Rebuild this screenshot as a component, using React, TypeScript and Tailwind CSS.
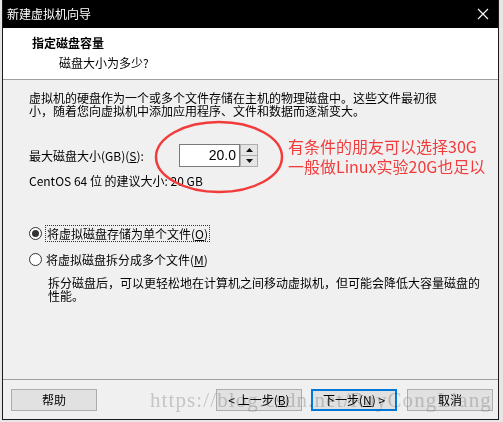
import React from 'react';

const cjk = "font-['Microsoft_YaHei','Noto_Sans_CJK_SC',sans-serif]";

const Radio = ({ checked }: { checked?: boolean }) => (
  <span className="flex h-[13px] w-[13px] shrink-0 items-center justify-center rounded-full border border-[#333] bg-white">
    {checked && <span className="h-[7px] w-[7px] rounded-full bg-[#333]" />}
  </span>
);

const Btn = ({ children, primary, className = '' }: { children: React.ReactNode; primary?: boolean; className?: string }) => (
  <button
    className={`flex h-[22px] w-[86px] items-center justify-center bg-[#e1e1e1] text-[12px] text-black ${
      primary ? 'border-2 border-[#0078d7]' : 'border border-[#adadad]'
    } ${className}`}
  >
    {children}
  </button>
);

export default function App() {
  return (
    <div className={`relative h-[422px] w-[503px] overflow-hidden bg-[#e6e6e6] ${cjk}`}>
      <div className="ml-[2px] flex h-[420px] w-[497px] flex-col border-b border-r border-l border-[#1a1a1a] bg-[#f0f0f0]">
        {/* title bar */}
        <div className="flex h-[28px] shrink-0 items-center justify-between bg-black pl-[4px] pr-[9px] text-white">
          <span className="text-[12px] leading-none">新建虚拟机向导</span>
          <svg width="12" height="12" viewBox="0 0 12 12" stroke="white" strokeWidth="1.1">
            <path d="M1 1 L11 11 M11 1 L1 11" />
          </svg>
        </div>

        {/* header */}
        <div className="h-[52px] shrink-0 border-b border-[#a0a0a0] bg-white pt-[6px]">
          <div className="pl-[29px] text-[12px] font-bold leading-[18px]">指定磁盘容量</div>
          <div className="pl-[56px] pt-[2px] text-[12px] leading-[18px]">磁盘大小为多少?</div>
        </div>

        {/* body */}
        <div className="flex flex-1 flex-col pl-[26px] pt-[11px] text-[12px] text-black">
          <p className="leading-[13px]">
            虚拟机的硬盘作为一个或多个文件存储在主机的物理磁盘中。这些文件最初很
            <br />
            小，随着您向虚拟机中添加应用程序、文件和数据而逐渐变大。
          </p>

          <div className="mt-[27px] flex items-center">
            <span className="w-[150px]">
              最大磁盘大小(GB)(<span className="underline">S</span>):
            </span>
            <div className="flex h-[23px] w-[61px] items-center justify-end border border-[#7a7a7a] bg-white pr-[3px] font-['Segoe_UI','Liberation_Sans',sans-serif] text-[14px]">
              20.0
            </div>
            <div className="flex h-[23px] w-[18px] flex-col">
              <div className="flex h-[12px] items-center justify-center border border-[#adadad] bg-[#e5e5e5]">
                <svg width="7" height="4" viewBox="0 0 7 4"><path d="M0 4 L3.5 0 L7 4 Z" fill="#111" /></svg>
              </div>
              <div className="flex h-[11px] items-center justify-center border border-t-0 border-[#adadad] bg-[#e5e5e5]">
                <svg width="7" height="4" viewBox="0 0 7 4"><path d="M0 0 L3.5 4 L7 0 Z" fill="#111" /></svg>
              </div>
            </div>
          </div>

          <div className="mt-[7px] leading-[14px]">CentOS 64 位 的建议大小: 20 GB</div>

          <div className="mt-[37px] flex items-center gap-[3px]">
            <Radio checked />
            <span className="border border-dotted border-[#333] px-px leading-[15px]">
              将虚拟磁盘存储为单个文件(<span className="underline">O</span>)
            </span>
          </div>

          <div className="mt-[10px] flex items-center gap-[4px]">
            <Radio />
            <span className="leading-[15px]">
              将虚拟磁盘拆分成多个文件(<span className="underline">M</span>)
            </span>
          </div>

          <p className="mt-[9px] pl-[19px] leading-[13px]">
            拆分磁盘后，可以更轻松地在计算机之间移动虚拟机，但可能会降低大容量磁盘的
            <br />
            性能。
          </p>
        </div>

        {/* footer */}
        <div className="h-[40px] shrink-0 border-t border-[#a0a0a0] pt-[9px]">
          <div className="flex pl-[8px]">
            <Btn>帮助</Btn>
            <Btn className="ml-[119px]">&lt; 上一步(<span className="underline">B</span>)</Btn>
            <Btn primary className="ml-[9px]">下一步(<span className="underline">N</span>) &gt;</Btn>
            <Btn className="ml-[10px]">取消</Btn>
          </div>
        </div>
      </div>

      {/* annotation */}
      <svg className="pointer-events-none absolute left-0 top-0" width="503" height="422">
        <ellipse cx="219" cy="157" rx="63" ry="35" fill="none" stroke="#f23c3c" strokeWidth="2.5" />
      </svg>
      <div className="pointer-events-none absolute left-[288px] top-[136px] text-[16px] leading-[20px] text-[#f23c3c]">
        有条件的朋友可以选择30G
        <br />
        一般做Linux实验20G也足以
      </div>

      {/* watermark */}
      <div className="pointer-events-none absolute left-[150px] top-[388px] whitespace-nowrap font-['Liberation_Serif',serif] text-[21px] leading-[24px] tracking-[1.1px] text-[#d2d2d2] mix-blend-multiply">
        https://blog.csdn.net/RayCongLiang
      </div>
    </div>
  );
}
